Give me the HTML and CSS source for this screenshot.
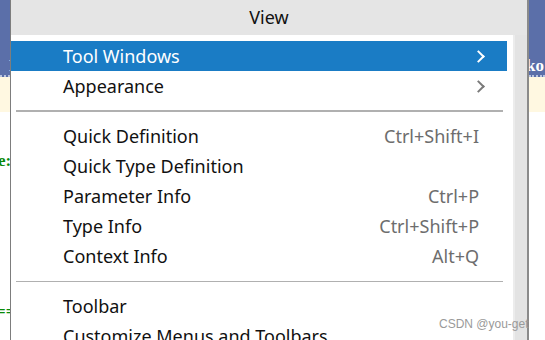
FILE: index.html
```html
<!DOCTYPE html>
<html lang="en">
<head>
  <meta charset="UTF-8" />
  <title>View menu</title>
  <link rel="stylesheet" href="styles.css">
</head>
<body>
  <div class="screen">
    <div class="editor left">
      <div class="tab"><span class="tab-text">N</span></div>
      <div class="notice"></div>
      <div class="code"><span class="code-e">e:</span><span class="code-eq">==</span></div>
    </div>

    <div class="window">
      <div class="title">View</div>
      <div class="window-body">
        <ul class="menu">
          <li class="item active"><span class="label">Tool Windows</span><span class="arrow"></span></li>
          <li class="item"><span class="label">Appearance</span><span class="arrow"></span></li>
          <li class="sep thick"></li>
          <li class="item"><span class="label">Quick Definition</span><span class="key">Ctrl+Shift+I</span></li>
          <li class="item"><span class="label">Quick Type Definition</span></li>
          <li class="item"><span class="label">Parameter Info</span><span class="key">Ctrl+P</span></li>
          <li class="item"><span class="label">Type Info</span><span class="key">Ctrl+Shift+P</span></li>
          <li class="item"><span class="label">Context Info</span><span class="key">Alt+Q</span></li>
          <li class="sep"></li>
          <li class="item"><span class="label">Toolbar</span></li>
          <li class="item"><span class="label">Customize Menus and Toolbars</span></li>
        </ul>
        <div class="scrollbar"></div>
      </div>
    </div>

    <div class="editor right">
      <div class="tab"><span class="tab-text">ko</span></div>
      <div class="notice"></div>
    </div>
  </div>

  <div class="watermark">CSDN @you-get</div>
</body>
</html>
```

FILE: styles.css
```css
* {
  box-sizing: border-box;
  margin: 0;
  padding: 0;
}

body {
  width: 545px;
  height: 340px;
  overflow: hidden;
  font-family: 'Noto Sans', sans-serif;
  background: white;
  position: relative;
}

.screen {
  display: flex;
  height: 340px;
}

/* editor peeking out either side of the popup */
.editor {
  display: flex;
  flex-direction: column;
  overflow: hidden;
  font-family: 'Liberation Serif', serif;
}

.left {
  width: 10px;
}

.right {
  width: 16px;
}

.tab {
  height: 77px;
  background: #5b6fa9;
  display: flex;
  align-items: flex-end;
  padding-bottom: 1px;
  border-bottom: 2px dotted #b9c4e0;
}

.tab-text {
  color: white;
  font-weight: bold;
  font-size: 17px;
  line-height: 17px;
}

.left .tab-text {
  margin-left: 9px;
}

.right .tab-text {
  margin-left: -3px;
}

.notice {
  height: 35px;
  background: #fff8e1;
}

.code {
  display: flex;
  flex-direction: column;
  color: #0a8a0a;
  font-size: 17px;
  font-weight: bold;
}

.code-e {
  margin-top: 39px;
  margin-left: -2px;
  line-height: 20px;
}

.code-eq {
  margin-top: 131px;
  margin-left: -4px;
  line-height: 20px;
}

/* the menu window */
.window {
  width: 519px;
  display: flex;
  flex-direction: column;
  border-left: 1px solid #7d7d7d;
  border-right: 2px solid #8a8a8a;
}

.title {
  height: 35px;
  background: #e5e5e5;
  text-align: center;
  font-size: 18px;
  line-height: 35px;
  color: #111;
}

.window-body {
  display: flex;
  flex: 1;
}

.menu {
  list-style: none;
  width: 503px;
  padding: 6px 6px 0 0;
}

.item {
  display: flex;
  align-items: center;
  height: 30px;
  padding-left: 52px;
  padding-right: 28px;
  font-size: 18px;
  color: #111;
  white-space: nowrap;
}

.item.active {
  background: #1a7cc5;
  color: white;
}

.label {
  flex: 1;
}

.key {
  color: #6d6d6d;
}

.arrow {
  width: 9px;
  height: 9px;
  border-top: 2px solid #7a7a7a;
  border-right: 2px solid #7a7a7a;
  transform: rotate(45deg);
  margin-right: -4px;
}

.active .arrow {
  border-color: white;
}

.sep {
  height: 20px;
  margin-left: 5px;
  margin-right: 4px;
  display: flex;
  align-items: center;
}

.sep::before {
  content: "";
  flex: 1;
  height: 1px;
  background: #b0b0b0;
}

.sep.thick::before {
  height: 2px;
}

.scrollbar {
  width: 14px;
  background: #e3e3e3;
  border-left: 2px solid #ececec;
}

.watermark {
  position: absolute;
  left: 439px;
  top: 317px;
  font-family: 'Liberation Sans', sans-serif;
  font-size: 12px;
  color: #9a9a9a;
}
```
